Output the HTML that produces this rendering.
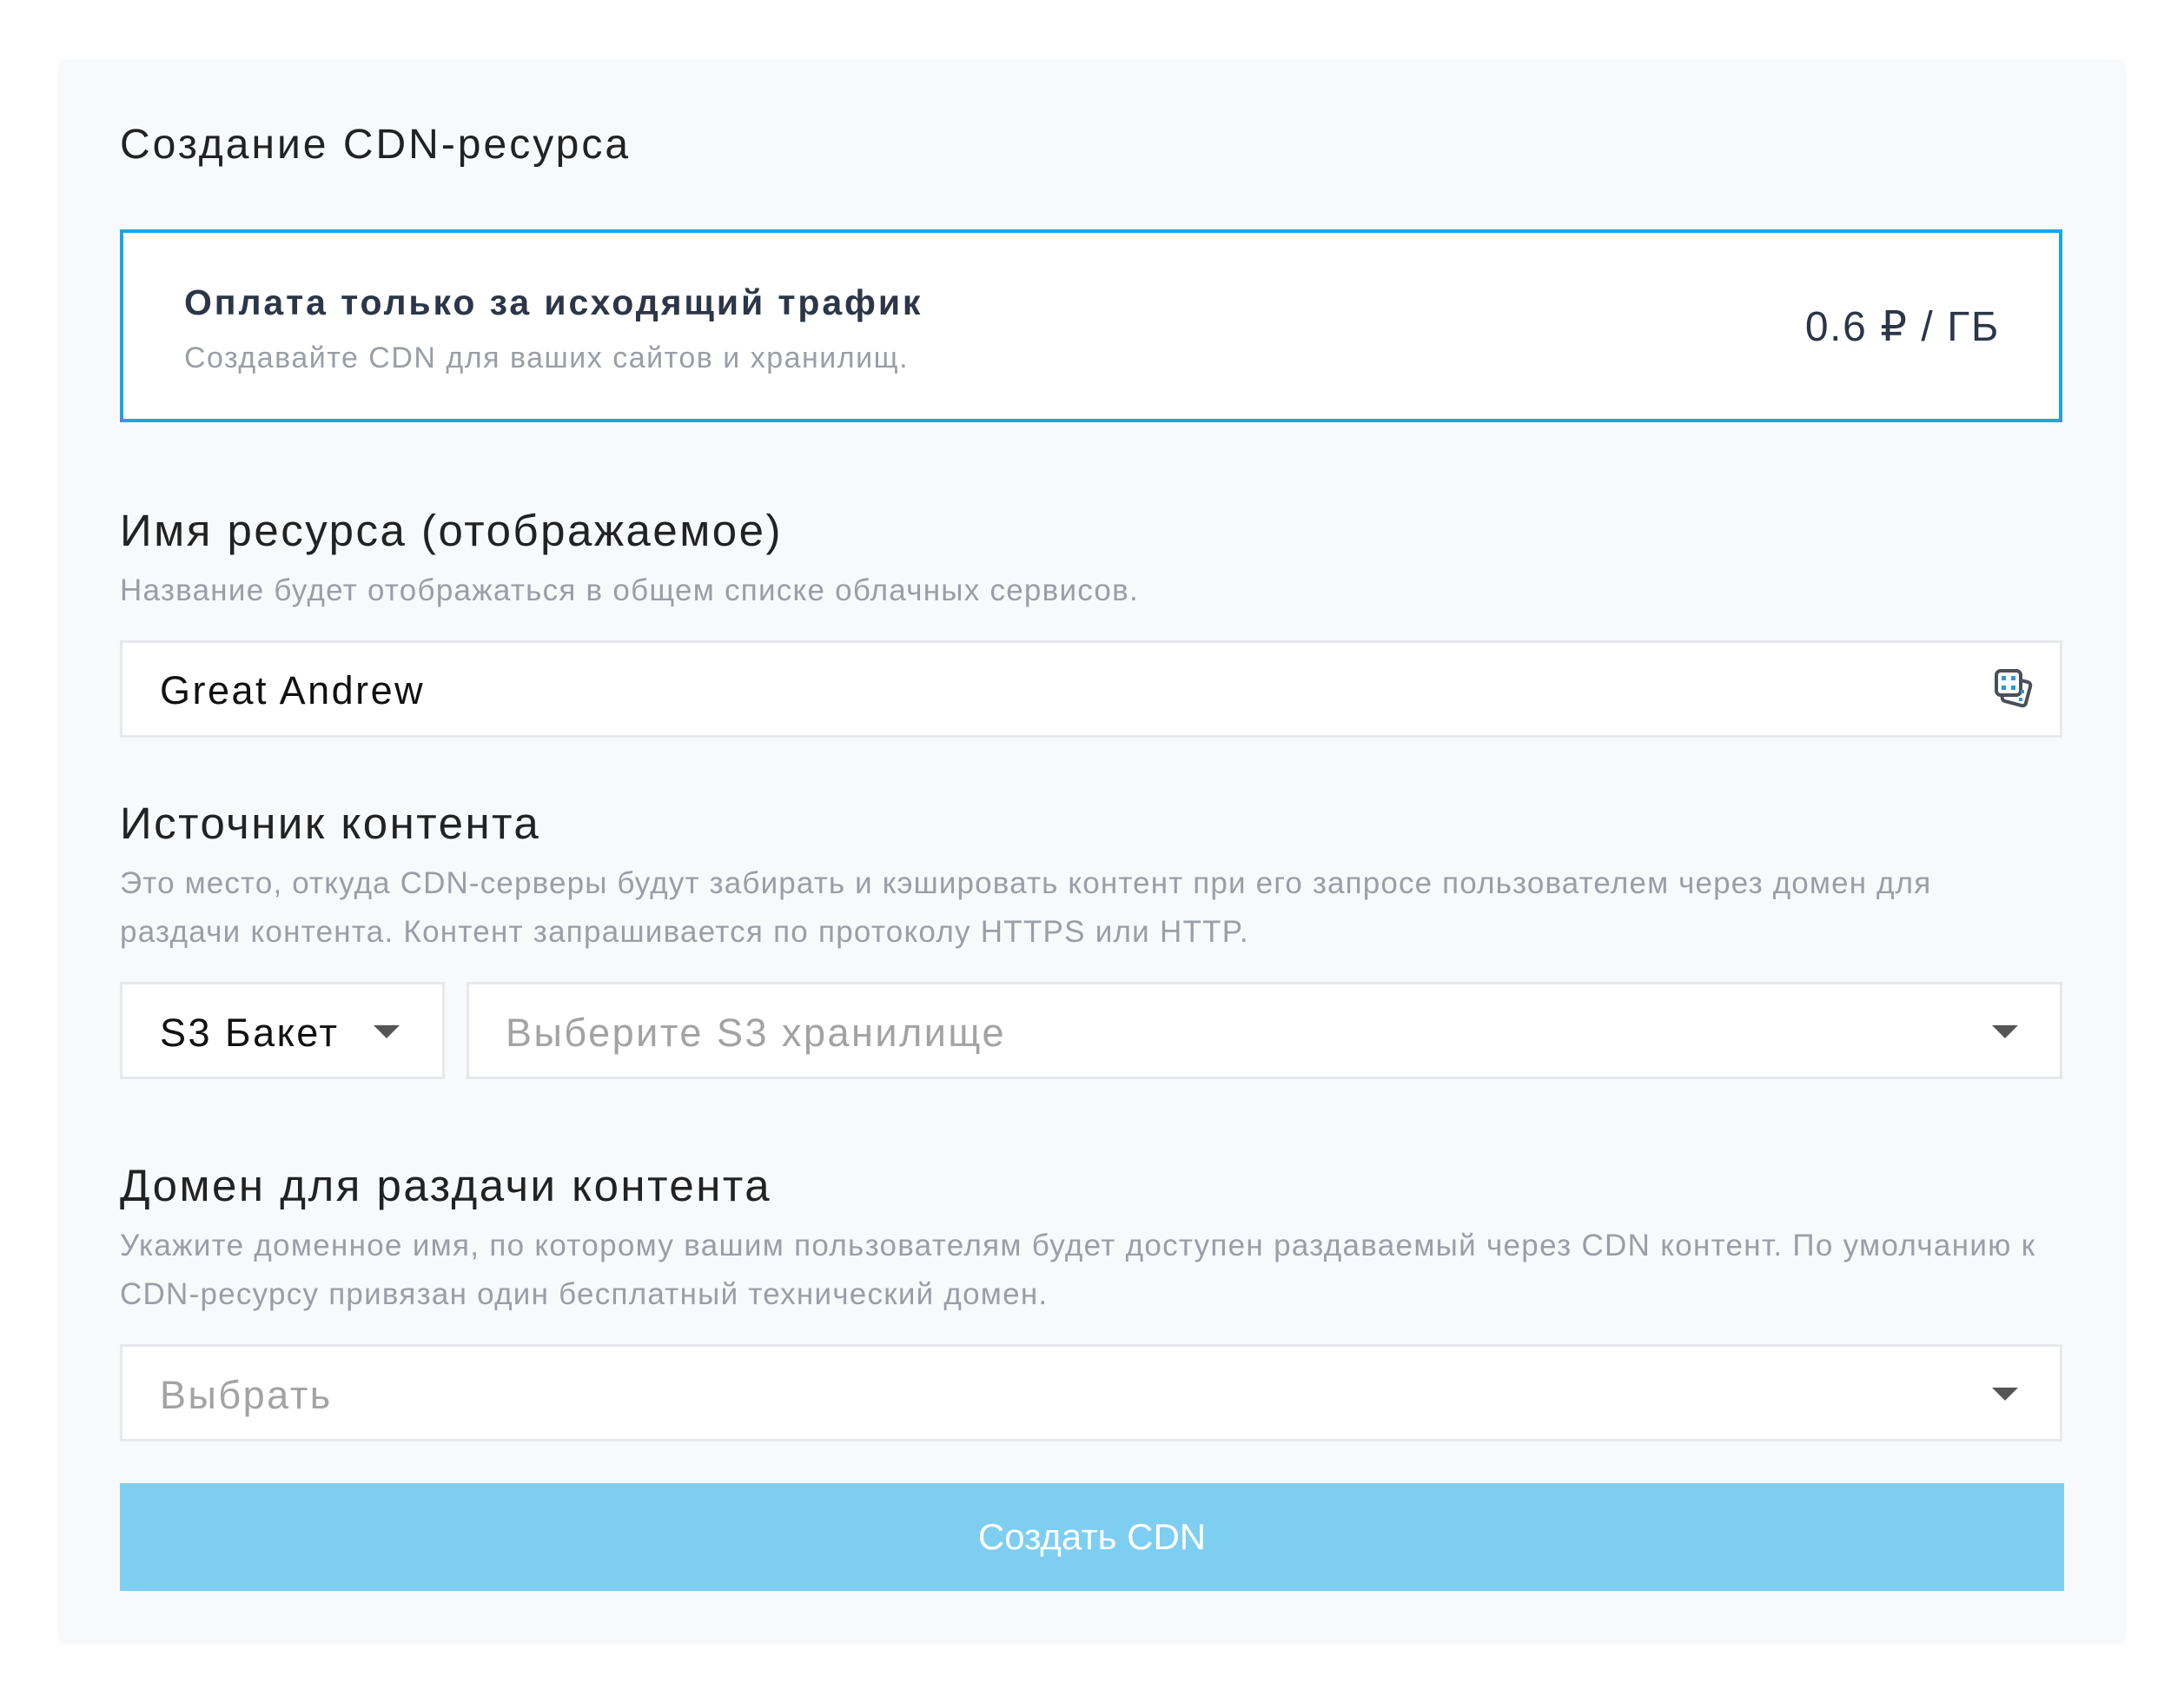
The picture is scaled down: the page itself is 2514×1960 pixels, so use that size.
<!DOCTYPE html>
<html><head><meta charset="utf-8"><style>
*{margin:0;padding:0;box-sizing:border-box}
body{width:2514px;height:1960px;background:#fff;font-family:"Liberation Sans","Noto Sans CJK SC",sans-serif;position:relative;overflow:hidden}
.card{position:absolute;left:69px;top:69px;width:2376px;height:1819px;background:#f8f9fb;box-shadow:0 2px 6px rgba(0,0,0,.06)}
.t{position:absolute;white-space:nowrap;line-height:1}
.h{letter-spacing:2.5px}
.d{letter-spacing:1.25px}
.i{letter-spacing:2.5px}
.box{position:absolute;background:#fff;border:3px solid #e6e8eb}
.arrow{position:absolute;width:0;height:0;border-left:15px solid transparent;border-right:15px solid transparent;border-top:15px solid #555}
</style></head><body>
<div class="card"></div>
<div class="t" style="left:138px;top:143px;font-size:48px;color:#222;letter-spacing:3px">Создание CDN-ресурса</div>
<div class="box" style="left:138px;top:264px;width:2236px;height:222px;border:4px solid #1ea5e0"></div>
<div class="t" style="left:212px;top:328px;font-size:41px;font-weight:bold;color:#2c3648;letter-spacing:2.9px">Оплата только за исходящий трафик</div>
<div class="t" style="left:212px;top:395px;font-size:34px;color:#9a9ea6;letter-spacing:1.5px">Создавайте CDN для ваших сайтов и хранилищ.</div>
<div class="t" style="right:212px;top:353px;font-size:48px;color:#2c3648;letter-spacing:1.6px">0.6 ₽ / ГБ</div>
<div class="t h" style="left:138px;top:585px;font-size:51px;color:#222">Имя ресурса (отображаемое)</div>
<div class="t d" style="left:138px;top:662px;font-size:35px;color:#9a9ea6">Название будет отображаться в общем списке облачных сервисов.</div>
<div class="box" style="left:138px;top:737px;width:2236px;height:112px"></div>
<div class="t i" style="left:184px;top:772px;font-size:45px;color:#111">Great Andrew</div>
<svg style="position:absolute;left:2294px;top:768px" width="50" height="50" viewBox="0 0 50 50">
<rect x="13" y="14" width="28" height="28" rx="4" transform="rotate(15 27 28)" fill="#fff" stroke="#4a4f58" stroke-width="4"/>
<rect x="4" y="4" width="28" height="28" rx="5" fill="#fff" stroke="#4a4f58" stroke-width="4"/>
<rect x="10" y="10" width="5" height="5" fill="#2f96dc"/><rect x="21" y="10" width="5" height="5" fill="#2f96dc"/>
<rect x="10" y="21" width="5" height="5" fill="#2f96dc"/><rect x="21" y="21" width="5" height="5" fill="#2f96dc"/>
<rect x="32" y="26" width="4" height="4" fill="#2f96dc"/><rect x="30" y="35" width="4" height="4" fill="#2f96dc"/>
</svg>
<div class="t h" style="left:138px;top:922px;font-size:51px;color:#222">Источник контента</div>
<div class="t d" style="left:138px;top:999px;font-size:35px;color:#9a9ea6;letter-spacing:1.15px">Это место, откуда CDN-серверы будут забирать и кэшировать контент при его запросе пользователем через домен для</div>
<div class="t d" style="left:138px;top:1055px;font-size:35px;color:#9a9ea6">раздачи контента. Контент запрашивается по протоколу HTTPS или HTTP.</div>
<div class="box" style="left:138px;top:1130px;width:374px;height:112px"></div>
<div class="t i" style="left:184px;top:1166px;font-size:45px;color:#111">S3 Бакет</div>
<div class="arrow" style="left:430px;top:1180px"></div>
<div class="box" style="left:537px;top:1130px;width:1837px;height:112px"></div>
<div class="t i" style="left:582px;top:1166px;font-size:45px;color:#a3a3a3">Выберите S3 хранилище</div>
<div class="arrow" style="left:2293px;top:1180px"></div>
<div class="t h" style="left:138px;top:1339px;font-size:51px;color:#222">Домен для раздачи контента</div>
<div class="t d" style="left:138px;top:1416px;font-size:35px;color:#9a9ea6;letter-spacing:1.3px">Укажите доменное имя, по которому вашим пользователям будет доступен раздаваемый через CDN контент. По умолчанию к</div>
<div class="t d" style="left:138px;top:1472px;font-size:35px;color:#9a9ea6">CDN-ресурсу привязан один бесплатный технический домен.</div>
<div class="box" style="left:138px;top:1547px;width:2236px;height:112px"></div>
<div class="t i" style="left:184px;top:1583px;font-size:45px;color:#a3a3a3">Выбрать</div>
<div class="arrow" style="left:2293px;top:1597px"></div>
<div style="position:absolute;left:138px;top:1707px;width:2238px;height:124px;background:#7ecef2;color:#fff;font-size:42px;text-align:center;line-height:124px">Создать CDN</div>
</body></html>
